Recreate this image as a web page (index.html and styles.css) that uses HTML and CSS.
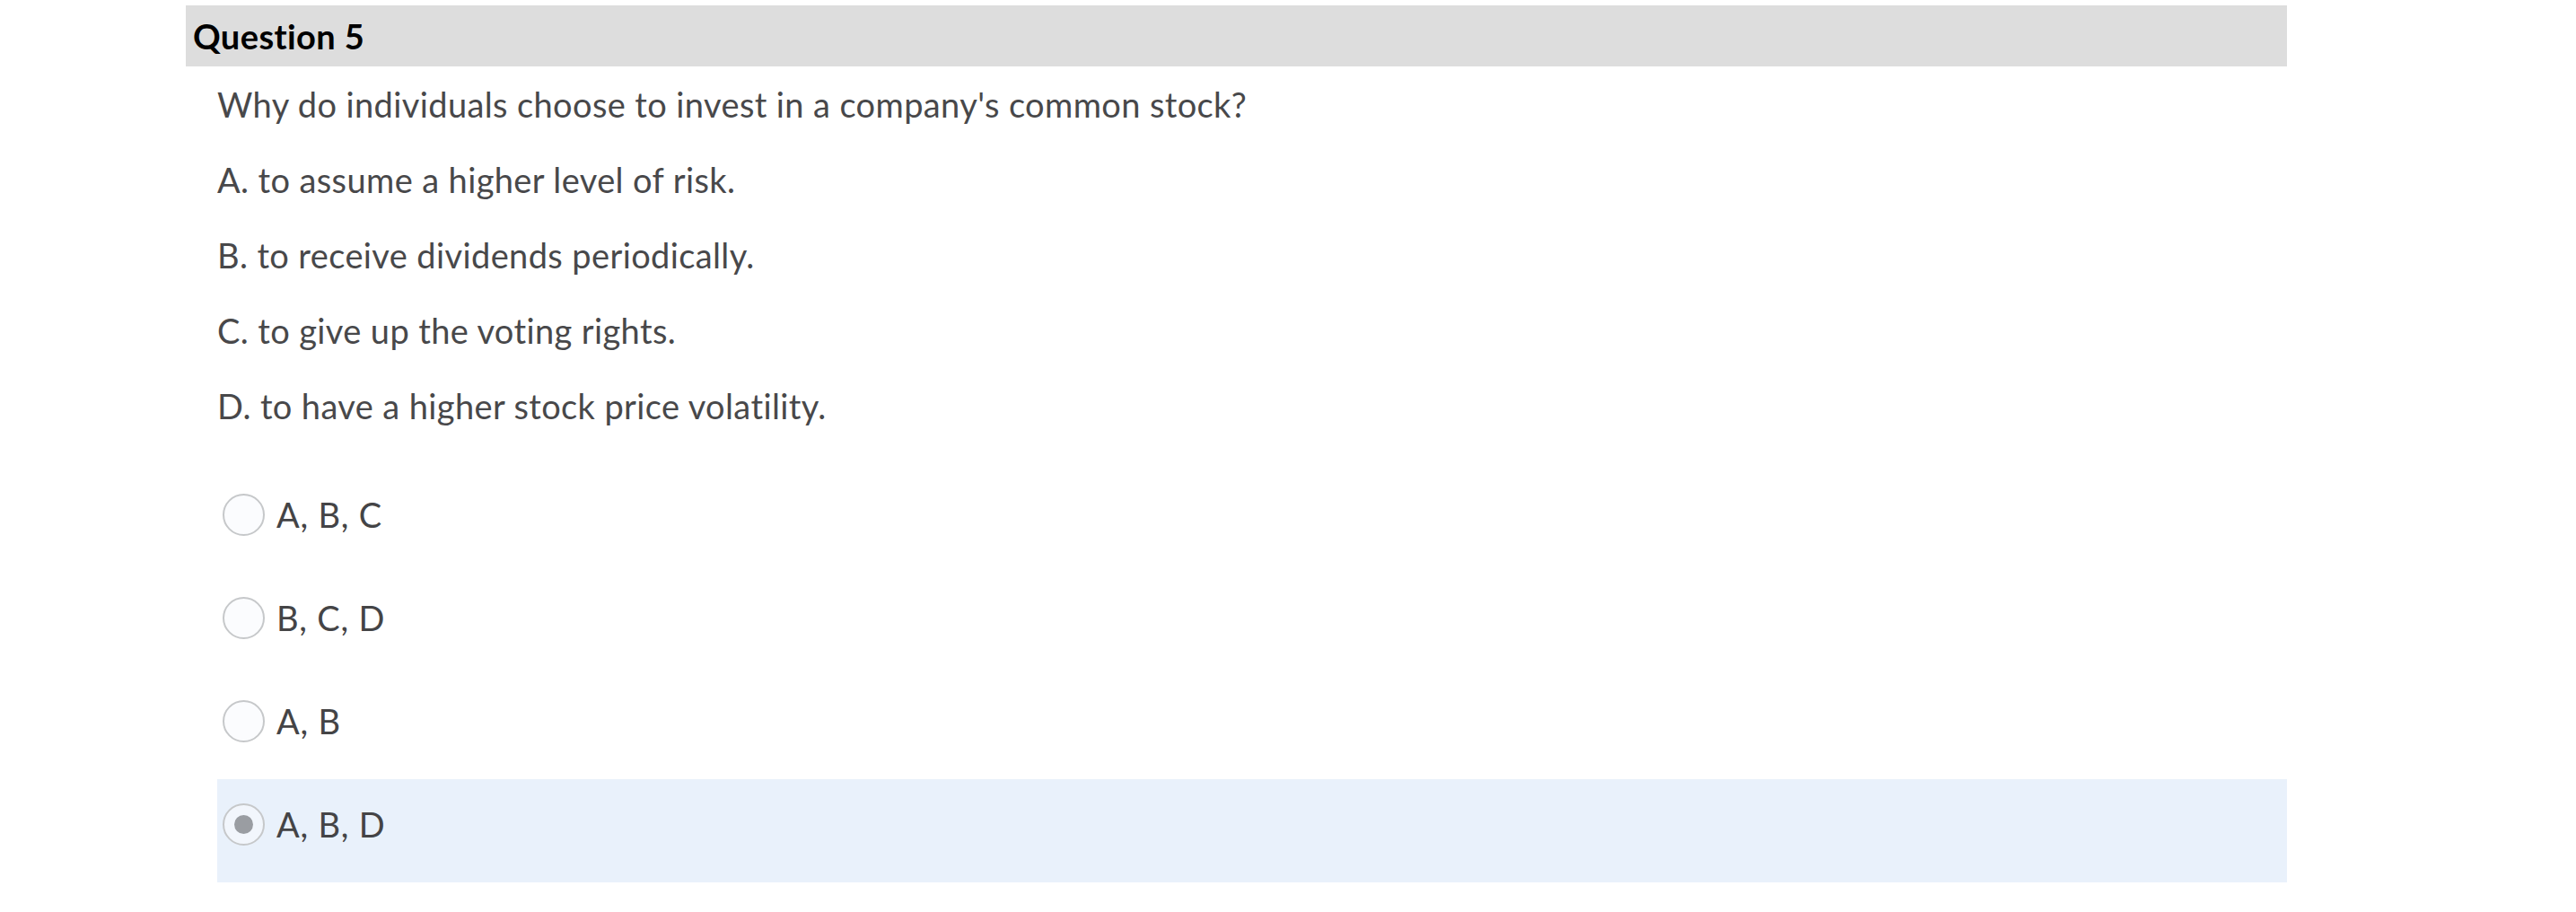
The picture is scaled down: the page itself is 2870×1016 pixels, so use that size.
FILE: index.html
```html
<!DOCTYPE html>
<html lang="en">
<head>
<meta charset="utf-8">
<title>Question 5</title>
<link rel="stylesheet" href="styles.css">
</head>
<body>
<div class="question">
  <div class="question-header">Question 5</div>
  <div class="question-body">
    <div class="question-text">
      <p class="prompt">Why do individuals choose to invest in a company's common stock?</p>
      <p class="item">A. to assume a higher level of risk.</p>
      <p class="item">B. to receive dividends periodically.</p>
      <p class="item">C. to give up the voting rights.</p>
      <p class="item">D. to have a higher stock price volatility.</p>
    </div>
    <div class="answers">
      <label class="answer"><span class="radio"></span><span class="answer-label">A, B, C</span></label>
      <label class="answer"><span class="radio"></span><span class="answer-label">B, C, D</span></label>
      <label class="answer"><span class="radio"></span><span class="answer-label">A, B</span></label>
      <label class="answer selected"><span class="radio checked"></span><span class="answer-label">A, B, D</span></label>
    </div>
  </div>
</div>
</body>
</html>
```
FILE: styles.css
```css
html, body {
  margin: 0;
  padding: 0;
  background: #ffffff;
}

body {
  font-family: "Lato", "Liberation Sans", sans-serif;
  color: #48484a;
}

.question {
  margin: 6px 0 0 207px;
  width: 2341px;
}

.question-header {
  height: 68px;
  line-height: 68px;
  background: #dddddd;
  padding-left: 8px;
  font-size: 38px;
  font-weight: 700;
  letter-spacing: 0.4px;
  color: #000000;
}

.question-body {
  padding-left: 35px;
}

.question-text p {
  margin: 0 0 38px 0;
  font-size: 38px;
  line-height: 46px;
  letter-spacing: 0.38px;
}

.question-text .prompt {
  margin-top: 19px;
}

.question-text .item:last-child {
  margin-bottom: 0;
}

.answers {
  margin-top: 48px;
  display: flex;
  flex-direction: column;
}

.answer {
  box-sizing: border-box;
  height: 115px;
  display: flex;
  align-items: flex-start;
  padding: 27px 0 0 6px;
  gap: 13px;
}

.answer.selected {
  background: #e9f1fb;
}

.radio {
  box-sizing: border-box;
  flex: none;
  width: 47px;
  height: 47px;
  border-radius: 50%;
  border: 2px solid #c6c8ca;
  background: #fbfcfe;
  display: flex;
  align-items: center;
  justify-content: center;
}

.radio.checked {
  background: #f2f6fc;
}

.radio.checked::after {
  content: "";
  width: 21px;
  height: 21px;
  border-radius: 50%;
  background: #9a9da2;
}

.answer-label {
  font-size: 38px;
  line-height: 46px;
  letter-spacing: 0.8px;
  color: #444446;
}
```
